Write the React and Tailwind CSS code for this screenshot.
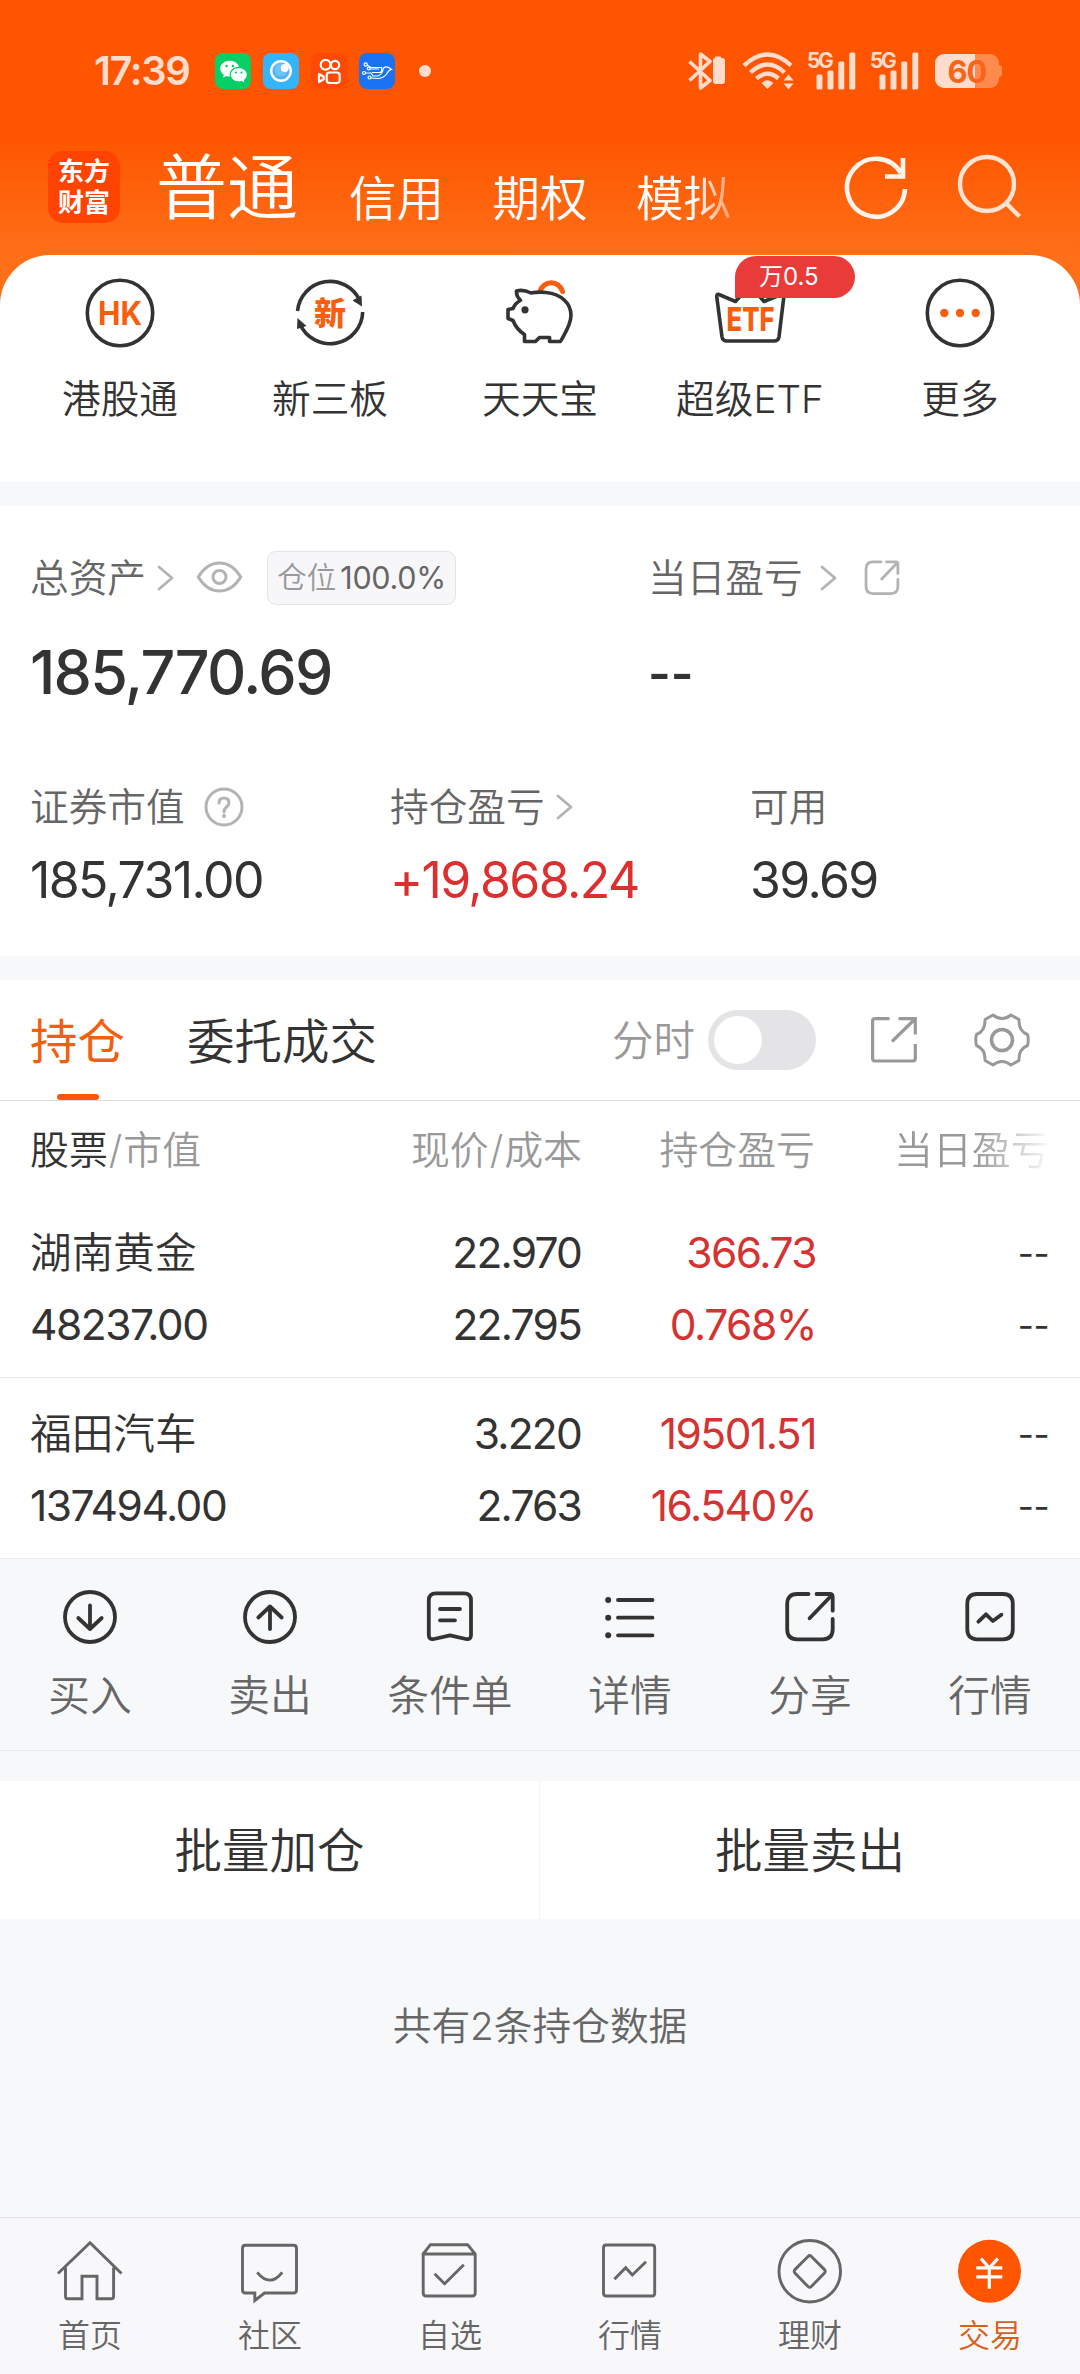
import { RiWechatFill } from 'react-icons/ri';

const shortcuts = [
  { label: '港股通', icon: <HkIcon /> },
  { label: '新三板', icon: <NeeqIcon /> },
  { label: '天天宝', icon: <PigIcon /> },
  { label: '超级ETF', icon: <EtfIcon />, badge: '万0.5' },
  { label: '更多', icon: <MoreIcon /> },
];

const holdings = [
  { name: '湖南黄金', value: '48237.00', price: '22.970', cost: '22.795', profit: '366.73', rate: '0.768%' },
  { name: '福田汽车', value: '137494.00', price: '3.220', cost: '2.763', profit: '19501.51', rate: '16.540%' },
];

const actions = [
  { label: '买入', d: 'M30 18.5V42M18.3 31L30 42L41.7 31', circle: true },
  { label: '卖出', d: 'M30 42V19.5M18.3 30.5L30 19.5L41.7 30.5', circle: true },
  { label: '条件单', d: 'M16 6.3H44Q51 6.3 51 13.3V48Q51 53 46 52L30 48.3L14 52Q8.8 53 8.8 48V13.3Q8.8 6.3 16 6.3ZM20 22H40M20 33.3H35' },
  { label: '详情', d: 'M18 13H52.5M18 30.7H52.5M18 48.3H52.5', dots: true },
  { label: '分享', d: 'M28.5 7H17Q7.2 7 7.2 17V42.3Q7.2 52.3 17 52.3H42.7Q52.7 52.3 52.7 42.3V32M29.6 31.3L51.5 8.5M36.5 7H49.7Q52.7 7 52.7 10V23.7' },
  { label: '行情', d: 'M17 7H43Q52.8 7 52.8 17V42.3Q52.8 52.3 43 52.3H17Q7.3 52.3 7.3 42.3V17Q7.3 7 17 7ZM18.4 34.7L26 27.3L32.8 34L41.4 27.7' },
];

const tabs = [
  { label: '首页', d: 'M4 37.5L36 6.7L67.5 37.5M11.5 31.5V60.5Q11.5 62.7 13.7 62.7H28V40.3H43V62.7H57.4Q59.6 62.7 59.6 60.5V31.5' },
  { label: '社区', d: 'M11.5 9.3H59.5Q62.5 9.3 62.5 12.3V54Q62.5 57 59.5 57H30.5L20.8 64.5V57H11.5Q8.5 57 8.5 54V12.3Q8.5 9.3 11.5 9.3ZM23.2 36.3Q36 52 48.2 36.3' },
  { label: '自选', d: 'M9.2 18L16.4 8.7H53.6L61.2 18V57Q61.2 60 58.2 60H12.2Q9.2 60 9.2 57V18H61.2M20.6 37.7L30.6 47.7L49.8 28.7' },
  { label: '行情', d: 'M12.2 9H58Q60.7 9 60.7 12V57Q60.7 60 58 60H12.2Q9.5 60 9.5 57V12Q9.5 9 12.2 9ZM20.4 43.3L31.7 31.7L38.3 39L52 25.7' },
  { label: '理财', d: 'M66.5 35.3A30.7 30.7 0 1 1 5 35.3A30.7 30.7 0 1 1 66.5 35.3ZM34 20.5Q35.7 18.8 37.4 20.5L50.5 33.6Q52 35.3 50.5 37L37.4 50.5Q35.7 52 34 50.5L20.9 37Q19.5 35.3 20.9 33.6Z' },
];

function HkIcon() {
  return (
    <svg width="72" height="72" viewBox="0 0 72 72" fill="none">
      <circle cx="36" cy="36" r="32.7" stroke="#333" strokeWidth="3.6" />
      <text x="36" y="48" textAnchor="middle" fontSize="33" fontWeight="700" textLength="44" lengthAdjust="spacingAndGlyphs" fill="#f95d0d">HK</text>
    </svg>
  );
}

function NeeqIcon() {
  return (
    <svg width="72" height="72" viewBox="0 0 72 72" fill="none">
      <path d="M3.5 34A32.7 32.7 0 0 1 66 24M68.7 35A32.7 32.7 0 0 1 6 47" stroke="#333" strokeWidth="3.6" />
      <path d="M58.5 23.5L67.5 18.5L68 29.5ZM3.5 41L12.5 49L3 52Z" fill="#333" />
      <text x="36" y="47.5" textAnchor="middle" fontSize="32" fontWeight="900" fill="#f95d0d">新</text>
    </svg>
  );
}

function PigIcon() {
  return (
    <svg width="72" height="72" viewBox="0 0 72 72" fill="none">
      <path d="M36 14.5A11.6 11.6 0 0 1 58.5 14.5" stroke="#f95d0d" strokeWidth="5" strokeLinecap="round" />
      <path d="M12.5 14Q19 12 27 16Q34 14.6 42 15.5C58 17 67 27 67 38.3C67 48 61 56 56.5 64.5H45.6V60.5H35.5L31.5 64.5H20.5V57.5Q12.5 52.5 9 43.5L4 41.5V32.5L9 31.5Q11 26.5 16.5 23.3Q12 19 12.5 14Z" stroke="#333" strokeWidth="3.6" strokeLinejoin="round" />
      <circle cx="21" cy="32.8" r="3.6" fill="#333" />
    </svg>
  );
}

function EtfIcon() {
  return (
    <svg width="72" height="72" viewBox="0 0 72 72" fill="none">
      <path d="M5 17.5L21.5 24.5L36 8L50 24.5L67 17.5Q70 17 69.8 20L65 60Q64.3 64 60 64H13Q8.7 64 8 60L2.8 20Q2.5 16.8 5 17.5Z" stroke="#333" strokeWidth="3.6" strokeLinejoin="round" />
      <text x="36.5" y="54" textAnchor="middle" fontSize="32" fontWeight="800" textLength="48" lengthAdjust="spacingAndGlyphs" fill="#f95d0d">ETF</text>
    </svg>
  );
}

function MoreIcon() {
  return (
    <svg width="72" height="72" viewBox="0 0 72 72" fill="none">
      <circle cx="36" cy="36" r="32.7" stroke="#333" strokeWidth="3.6" />
      <g fill="#f95d0d">
        <circle cx="20.3" cy="36" r="4.2" />
        <circle cx="36" cy="36" r="4.2" />
        <circle cx="51.7" cy="36" r="4.2" />
      </g>
    </svg>
  );
}

function Chevron() {
  return (
    <svg width="17" height="26" viewBox="0 0 17 26" fill="none" stroke="#b3b3b3" strokeWidth="2.8" strokeLinecap="round" strokeLinejoin="round">
      <path d="M2 2L15 13L2 24" />
    </svg>
  );
}

function Signal() {
  return (
    <div className="relative h-[38px] w-[49px]">
      <span className="absolute -top-[1px] left-0 text-[21px] font-bold leading-[20px] tracking-[-2.5px]">5G</span>
      <svg width="49" height="38" viewBox="0 0 49 38" fill="currentColor">
        <rect x="9.5" y="22.5" width="6" height="15" rx="1.5" />
        <rect x="20.5" y="18.5" width="6" height="19" rx="1.5" />
        <rect x="31.3" y="9.5" width="6" height="28" rx="1.5" />
        <rect x="42.3" y="0.5" width="6" height="37" rx="1.5" />
      </svg>
    </div>
  );
}

function StatusBar() {
  return (
    <div className="flex h-[36px] items-center pl-[94px] pr-[78px] text-[#ffdccb]">
      <span className="w-[121px] text-[40px] font-semibold leading-none tracking-[-1.4px]">17:39</span>
      <div className="flex gap-3">
        <div className="flex h-9 w-9 items-center justify-center rounded-[8px] bg-[#06cf65] text-white">
          <RiWechatFill size={29} />
        </div>
        <svg width="36" height="36" viewBox="0 0 36 36" fill="none">
          <rect width="36" height="36" rx="8" fill="#33b5fc" />
          <circle cx="18" cy="18" r="9.8" fill="#50b4f3" stroke="#fff" strokeWidth="2.4" />
          <circle cx="18" cy="17" r="6.5" fill="#6cc4fb" />
          <circle cx="21.8" cy="15" r="4" fill="#fff" />
        </svg>
        <svg width="36" height="36" viewBox="0 0 36 36" fill="none" stroke="#fff" strokeWidth="2.2" strokeLinejoin="round">
          <rect width="36" height="36" rx="8" fill="#ff4906" stroke="none" />
          <circle cx="14.6" cy="11.7" r="4.9" />
          <circle cx="24" cy="12" r="4.2" />
          <rect x="15.7" y="19.5" width="13" height="10.5" rx="3" />
          <path d="M8 21L12.6 23.7V26.3L8 29Z" />
        </svg>
        <svg width="36" height="36" viewBox="0 0 36 36" fill="none" stroke="#fff" strokeWidth="1.2">
          <rect width="36" height="36" rx="8" fill="#1a73f5" stroke="none" />
          <path d="M8 12L12 14.5H22.5Q23.5 17.5 21.5 19.5H13M11 16H20M6 20H12L14 23H19Q23.5 21 24.5 15Q28 12 32.5 16.5Q29.5 17 28 20.5Q25 25 19 25.5L12 25" />
          <circle cx="6.7" cy="11.5" r="1.6" />
          <circle cx="9.7" cy="15.6" r="1.4" />
          <circle cx="5" cy="20" r="1.5" />
          <circle cx="10.5" cy="24.5" r="1.5" />
        </svg>
      </div>
      <span className="ml-6 h-3 w-3 rounded-full bg-[#ffdccb]" />
      <div className="ml-auto flex items-center">
        <svg width="40" height="40" viewBox="0 0 40 40" fill="none" stroke="currentColor" strokeWidth="3.6" strokeLinejoin="round">
          <path d="M2.5 10.5L23 29.5L13.5 37V3L23 10.5L2.5 29.5" />
          <path d="M28 7V5.5H34V7H35Q38 7 38 10V30Q38 33 35 33H29Q26 33 26 30V10Q26 7 28 7Z" fill="currentColor" stroke="none" />
        </svg>
        <svg className="ml-[15px]" width="53" height="38" viewBox="0 0 53 38" fill="none" stroke="currentColor" strokeWidth="4.4">
          <path d="M2 13.5Q25.5 -8.5 49 13.5M8.5 20.5Q25.5 4.5 42.5 20.5M14.5 26.5Q25.5 17 36.5 26.5" />
          <path d="M19.5 31Q25.5 25.5 31.5 31L25.5 37ZM41.5 28.5L46.5 22.5L51.5 28.5ZM41.5 31.5L46.5 37.5L51.5 31.5Z" fill="currentColor" stroke="none" />
        </svg>
        <div className="ml-[12px]"><Signal /></div>
        <div className="ml-[14px]"><Signal /></div>
        <div className="ml-[16px] flex items-center">
          <div className="flex h-[34px] w-[64px] items-center justify-center rounded-[9px] bg-[linear-gradient(to_right,#ffdccb_63%,#ff8a4d_63%)] text-[31px] font-bold leading-none tracking-[-1px] text-[#f8651a]">60</div>
          <span className="h-3 w-[3px] rounded-r-sm bg-[#ff8a4d]" />
        </div>
      </div>
    </div>
  );
}

function Header() {
  return (
    <header className="h-[305px] bg-[linear-gradient(to_bottom,#ff5500_135px,#ff6f18_255px)] pt-[53px]">
      <StatusBar />
      <nav className="mt-[62px] flex h-[72px] items-center pl-12 text-white">
        <div className="flex h-[72px] w-[72px] flex-col items-center justify-center rounded-[15px] bg-[#ff4402] text-[26px] font-bold leading-[31px]">
          <span>东方</span>
          <span>财富</span>
        </div>
        <span className="ml-[36px] text-[71px] leading-none">普通</span>
        <div className="ml-[51px] mt-[23px] flex gap-[48.5px] text-[47.5px] leading-none">
          <span>信用</span>
          <span>期权</span>
          <span className="[mask-image:linear-gradient(to_right,black_62%,transparent_122%)]">模拟</span>
        </div>
        <svg className="ml-[110px]" width="70" height="70" viewBox="0 0 70 70" fill="none" stroke="#fff4ec" strokeWidth="4.6">
          <path d="M64 37A29 29 0 1 1 60 21M62 6V24.5H44" />
        </svg>
        <svg className="ml-[44px]" width="70" height="70" viewBox="0 0 70 70" fill="none" stroke="#ffe3d2" strokeWidth="4.4">
          <circle cx="32" cy="32" r="27" />
          <path d="M51 51L64.5 64.5" />
        </svg>
      </nav>
    </header>
  );
}

function Shortcuts() {
  return (
    <section className="-mt-[50px] flex h-[227px] rounded-t-[50px] bg-white px-[15px] pt-[22px]">
      {shortcuts.map((s) => (
        <div key={s.label} className="relative flex w-[210px] flex-col items-center">
          {s.icon}
          <span className="mt-[30px] whitespace-nowrap text-[38.7px] leading-[40px] text-[#333]">{s.label}</span>
          {s.badge && (
            <span className="absolute -top-[21px] left-[90px] flex h-[42px] w-[120px] items-center rounded-[21px] rounded-bl-none bg-[#ea3b3b] pl-6 text-[24px] font-normal leading-none text-white">{s.badge}</span>
          )}
        </div>
      ))}
    </section>
  );
}

function Assets() {
  return (
    <section className="mt-6 h-[450px] bg-white pl-[30px] pt-[45px] text-[38.7px] leading-none text-[#666]">
      <div className="flex h-[54px] items-center">
        <div className="flex w-[618px] items-center">
          <span>总资产</span>
          <span className="ml-[11px]"><Chevron /></span>
          <svg className="ml-[22px]" width="47" height="34" viewBox="0 0 47 34" fill="none" stroke="#b3b3b3" strokeWidth="3">
            <path d="M2.3 16C8 6.5 15 2 23.5 2S39 6.5 44.7 16C39 25.5 32 30 23.5 30S8 25.5 2.3 16Z" />
            <circle cx="23.5" cy="16" r="6.5" />
          </svg>
          <span className="ml-[24px] flex h-[54px] w-[189px] items-center justify-center gap-1 rounded-[9px] border border-[#e4e4e7] bg-[#f7f7fa] text-[29.5px] text-[#999]">
            仓位
            <span className="text-[30.5px] font-normal tracking-[-0.3px] text-[#666]">100.0%</span>
          </span>
        </div>
        <span>当日盈亏</span>
        <span className="ml-[17px]"><Chevron /></span>
        <svg className="ml-[24px]" width="42" height="42" viewBox="0 0 60 60" fill="none" stroke="#b3b3b3" strokeWidth="4" strokeLinecap="round">
          <path d={actions[4].d} />
        </svg>
      </div>
      <div className="mt-[37px] flex h-[60px] items-center text-[61px] font-medium text-[#333]">
        <span className="w-[618px] tracking-[-1.7px]">185,770.69</span>
        <span className="mt-[2px] text-[49px] font-semibold">--</span>
      </div>
      <div className="mt-[85px] flex h-[40px] items-center">
        <div className="flex w-[360px] items-center">
          证券市值
          <svg className="ml-[19px]" width="40" height="40" viewBox="0 0 40 40" fill="none" stroke="#b3b3b3" strokeWidth="3">
            <circle cx="20" cy="20" r="18" />
            <path d="M15 16Q15 11 20 11T25 16Q25 18 22.5 20T20 25" strokeLinecap="round" />
            <circle cx="20" cy="29" r="2" fill="#b3b3b3" stroke="none" />
          </svg>
        </div>
        <div className="flex w-[360px] items-center gap-[11px]">
          持仓盈亏
          <Chevron />
        </div>
        <span>可用</span>
      </div>
      <div className="mt-[28px] flex h-[50px] items-center text-[50px] font-normal tracking-[-1.6px] text-[#333]">
        <span className="w-[360px]">185,731.00</span>
        <span className="w-[360px] text-[#dd2f2f]">+19,868.24</span>
        <span>39.69</span>
      </div>
    </section>
  );
}

function TabBar() {
  return (
    <div className="flex h-[121px] items-center border-b border-[#ddd] pl-[30px] text-[47.5px] leading-none text-[#333]">
      <div className="relative flex h-full items-center pt-[3px] font-normal text-[#f2600f]">
        持仓
        <span className="absolute bottom-0 left-[27px] h-[6px] w-[42px] rounded-full bg-[#fb560a]" />
      </div>
      <span className="ml-[62px] mt-[3px]">委托成交</span>
      <span className="ml-[235px] mt-[3px] text-[41.5px] text-[#999]">分时</span>
      <span className="ml-[13px] flex h-[60px] w-[108px] items-center rounded-full bg-[#e4e4e7] px-[6px]">
        <span className="h-12 w-12 rounded-full bg-white" />
      </span>
      <svg className="ml-[48px]" width="60" height="60" viewBox="0 0 60 60" fill="none" stroke="#999" strokeWidth="3.2">
        <path d="M25.5 8.6H11Q8.6 8.6 8.6 11V48.6Q8.6 51 11 51H49Q51.3 51 51.3 48.6V34M28 31.5L51 9M34.5 8.6H51.3V24.6" />
      </svg>
      <svg className="ml-[48px]" width="60" height="60" viewBox="0 0 60 60" fill="none" stroke="#999" strokeWidth="3" strokeLinejoin="round">
        <path d="M21 5Q30 12 39 5L47 9.5Q46.5 21 55.5 24.5Q57 30 55.5 35.5Q46.5 39 47 50.5L39 55Q30 48 21 55L13 50.5Q13.5 39 4.5 35.5Q3 30 4.5 24.5Q13.5 21 13 9.5Z" />
        <circle cx="30" cy="30" r="10.5" strokeWidth="3.6" />
      </svg>
    </div>
  );
}

function Holdings() {
  return (
    <section className="mt-6 bg-white">
      <TabBar />
      <div className="flex h-[98px] items-center pl-[30px] text-[38.9px] leading-none text-[#999]">
        <span className="w-[252px]"><span className="text-[#333]">股票</span><span className="mx-[1px]">/</span>市值</span>
        <span className="w-[300px] text-right">现价<span className="mx-[1px]">/</span>成本</span>
        <span className="w-[233px] text-right">持仓盈亏</span>
        <span className="ml-[79px] [mask-image:linear-gradient(to_right,black_52%,transparent_102%)]">当日盈亏</span>
      </div>
      {holdings.map((h, i) => (
        <div key={h.name} className={`border-b border-[#ebebeb] pl-[30px] pr-[31px] text-[42.5px] font-normal leading-[72px] tracking-[-1.5px] text-[#333] ${i === 0 ? 'h-[179px] pt-[18px]' : 'h-[181px] pt-[20px]'}`}>
          <div className="flex">
            <span className="w-[252px] text-[41.7px] font-[350] tracking-normal">{h.name}</span>
            <span className="w-[299px] text-right tracking-[-1.8px]">{h.price}</span>
            <span className="w-[235px] text-right text-[#d53232]">{h.profit}</span>
            <span className="ml-auto text-[35px] tracking-[-0.5px]">--</span>
          </div>
          <div className="flex">
            <span className="w-[252px]">{h.value}</span>
            <span className="w-[299px] text-right tracking-[-1.8px]">{h.cost}</span>
            <span className="w-[235px] text-right text-[#d53232]">{h.rate}</span>
            <span className="ml-auto text-[35px] tracking-[-0.5px]">--</span>
          </div>
        </div>
      ))}
    </section>
  );
}

function Actions() {
  return (
    <section className="flex h-[192px] border-b border-[#ebebeb] pt-[28px]">
      {actions.map((a) => (
        <div key={a.label} className="flex w-[180px] flex-col items-center">
          <svg width="60" height="60" viewBox="0 0 60 60" fill="none" stroke="#333" strokeWidth="3.8" strokeLinecap="round" strokeLinejoin="round">
            {a.circle && <circle cx="30" cy="30" r="25" />}
            {a.dots && [13, 30.7, 48.3].map((y) => <circle key={y} cx="8.2" cy={y} r="3" fill="#333" stroke="none" />)}
            <path d={a.d} />
          </svg>
          <span className="mt-[28px] text-[41.7px] leading-[42px] text-[#666]">{a.label}</span>
        </div>
      ))}
    </section>
  );
}

function BottomNav() {
  return (
    <footer className="flex h-[157px] border-t border-[#e2e2e4] bg-[#f8f8fb] pt-[18px]">
      {tabs.map((t, i) => (
        <div key={i} className="flex w-[180px] flex-col items-center text-[#666]">
          <svg width="72" height="72" viewBox="0 0 72 72" fill="none" stroke="currentColor" strokeWidth="2.9">
            <path d={t.d} />
          </svg>
          <span className="mt-[11px] text-[32px] leading-[34px]">{t.label}</span>
        </div>
      ))}
      <div className="flex w-[180px] flex-col items-center text-[#d9601c]">
        <svg width="72" height="72" viewBox="0 0 72 72" fill="none">
          <circle cx="35.5" cy="35.3" r="31.5" fill="#ff5500" />
          <path d="M27 22.5L35.3 32L43.8 22.5M22.3 31.8H48.3M22.3 40.8H48.3M35.3 32V52.7" stroke="#fff" strokeWidth="3.2" />
        </svg>
        <span className="mt-[11px] text-[32px] leading-[34px]">交易</span>
      </div>
    </footer>
  );
}

export default function App() {
  return (
    <div className="flex h-[2374px] w-[1080px] flex-col overflow-hidden bg-[#f7f8fa] font-['Inter','Noto_Sans_CJK_SC',sans-serif] font-[350]">
      <Header />
      <Shortcuts />
      <Assets />
      <Holdings />
      <Actions />
      <div className="mt-[30px] flex h-[138px] items-center bg-white text-center text-[47.5px] leading-none text-[#333]">
        <span className="mt-[2px] w-[539px]">批量加仓</span>
        <span className="h-full w-px bg-[#f4f4f6]" />
        <span className="mt-[2px] flex-1">批量卖出</span>
      </div>
      <p className="mt-[82px] text-center text-[38.7px] leading-[50px] text-[#666]">共有2条持仓数据</p>
      <div className="mt-auto">
        <BottomNav />
      </div>
    </div>
  );
}
